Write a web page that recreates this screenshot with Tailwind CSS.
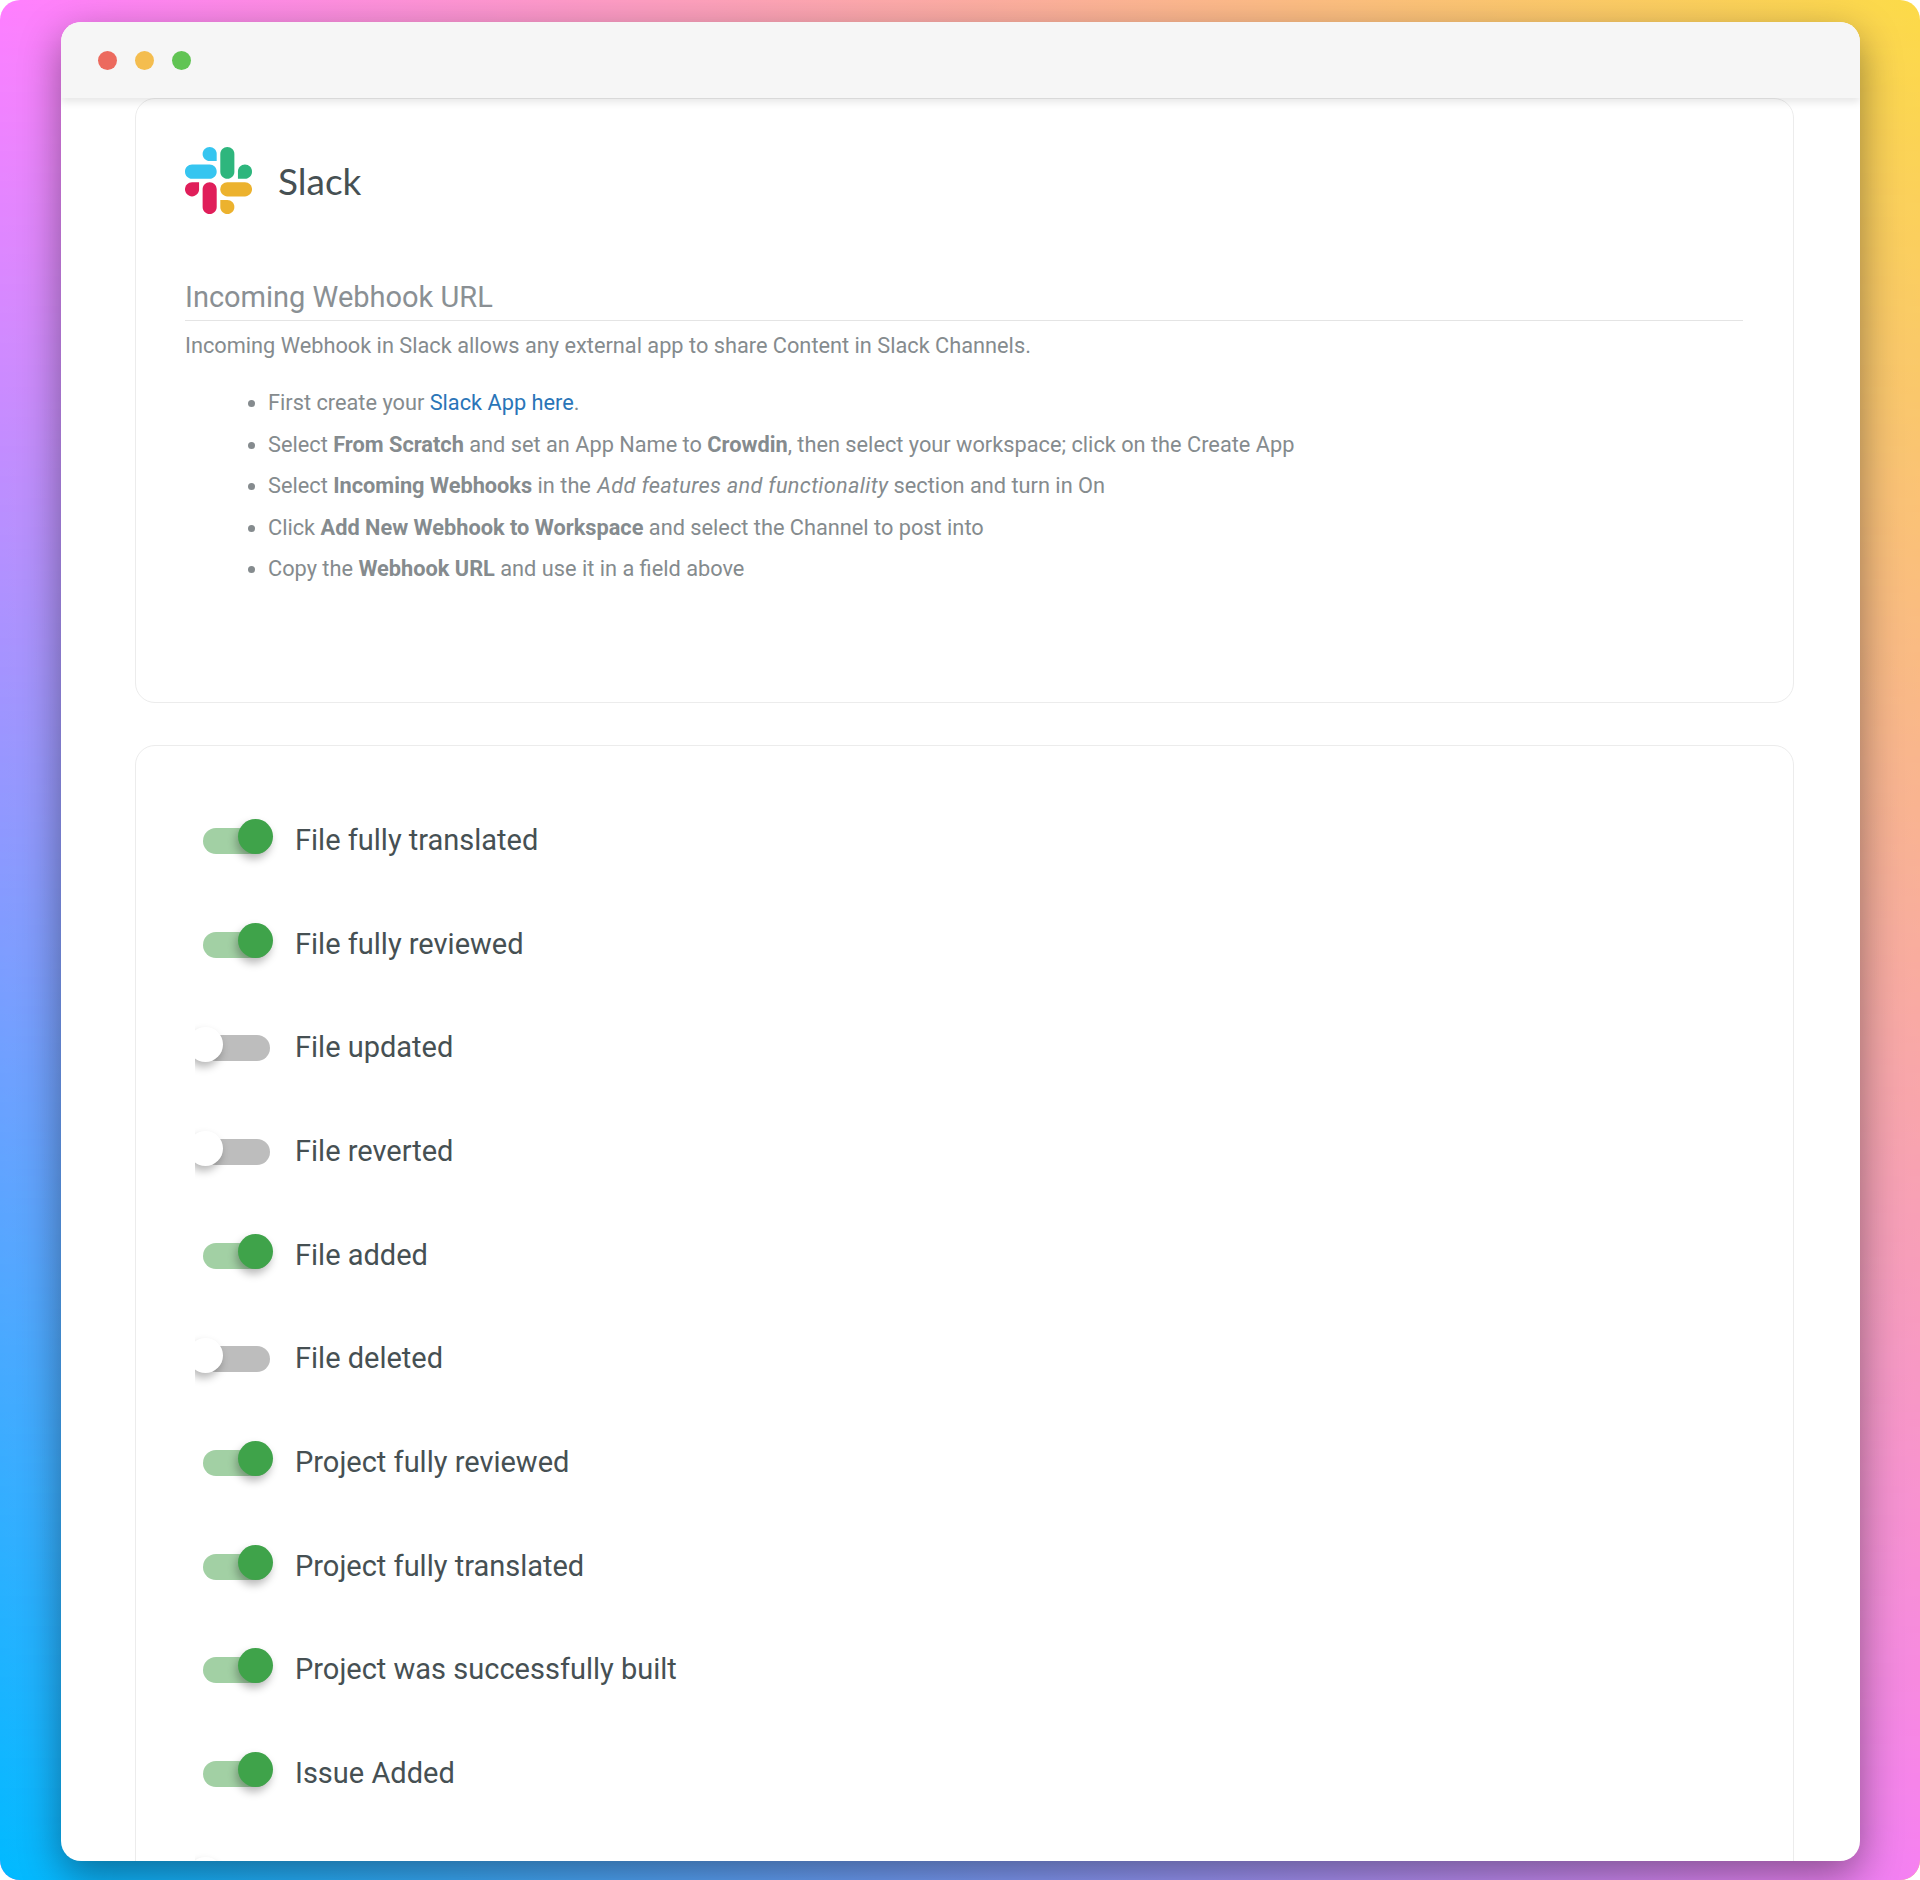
<!DOCTYPE html>
<html lang="en">
<head>
    <meta charset="UTF-8">
    <title>Crowdin Slack integration</title>
    <script src="https://cdn.jsdelivr.net/npm/@tailwindcss/browser@4"></script>
</head>
<body class="bg-white font-['Roboto',sans-serif]">

    <!-- Gradient backdrop -->
    <div class="relative h-[1880px] w-[1920px] overflow-hidden rounded-[20px] bg-[linear-gradient(to_right,#ff7fff,#fcdb48)] pt-[22px] pr-[60px] pb-[19px] pl-[61px]">
        <div class="absolute inset-0 bg-[linear-gradient(to_right,#00baff,#f67ff2)] [mask-image:linear-gradient(to_bottom,transparent,black)]"></div>

        <!-- Window -->
        <div class="relative flex h-full flex-col overflow-hidden rounded-[20px] bg-white shadow-[0_14px_40px_rgba(0,0,0,0.4)]">
            <div class="relative z-10 flex h-[76px] shrink-0 items-center gap-[18px] bg-[#f6f6f6] pl-[37px] shadow-[0_4px_8px_rgba(0,0,0,0.1)]">
                <span class="h-[19px] w-[19px] rounded-full bg-[#ec6a5e]"></span>
                <span class="h-[19px] w-[19px] rounded-full bg-[#f4bd4f]"></span>
                <span class="h-[19px] w-[19px] rounded-full bg-[#61c454]"></span>
            </div>

            <div class="flex flex-col gap-[42px] pr-[66px] pl-[74px]">
                <!-- Slack card -->
                <section class="h-[605px] shrink-0 rounded-[20px] border border-[#ececec] pt-[48px] pr-[50px] pl-[49px]">
                    <div class="flex items-center gap-[26px]">
                        <svg class="h-[67px] w-[67px]" viewBox="0 0 122.8 122.8">
                            <path d="M25.8 77.6c0 7.1-5.8 12.9-12.9 12.9S0 84.7 0 77.6s5.8-12.9 12.9-12.9h12.9v12.9z" fill="#E01E5A"/>
                            <path d="M32.3 77.6c0-7.1 5.8-12.9 12.9-12.9s12.9 5.8 12.9 12.9v32.3c0 7.1-5.8 12.9-12.9 12.9s-12.9-5.8-12.9-12.9V77.6z" fill="#E01E5A"/>
                            <path d="M45.2 25.8c-7.1 0-12.9-5.8-12.9-12.9S38.1 0 45.2 0s12.9 5.8 12.9 12.9v12.9H45.2z" fill="#36C5F0"/>
                            <path d="M45.2 32.3c7.1 0 12.9 5.8 12.9 12.9s-5.8 12.9-12.9 12.9H12.9C5.8 58.1 0 52.3 0 45.2s5.8-12.9 12.9-12.9h32.3z" fill="#36C5F0"/>
                            <path d="M97 45.2c0-7.1 5.8-12.9 12.9-12.9s12.9 5.8 12.9 12.9-5.8 12.9-12.9 12.9H97V45.2z" fill="#2EB67D"/>
                            <path d="M90.5 45.2c0 7.1-5.8 12.9-12.9 12.9s-12.9-5.8-12.9-12.9V12.9C64.7 5.8 70.5 0 77.6 0s12.9 5.8 12.9 12.9v32.3z" fill="#2EB67D"/>
                            <path d="M77.6 97c7.1 0 12.9 5.8 12.9 12.9s-5.8 12.9-12.9 12.9-12.9-5.8-12.9-12.9V97h12.9z" fill="#ECB22E"/>
                            <path d="M77.6 90.5c-7.1 0-12.9-5.8-12.9-12.9s5.8-12.9 12.9-12.9h32.3c7.1 0 12.9 5.8 12.9 12.9s-5.8 12.9-12.9 12.9H77.6z" fill="#ECB22E"/>
                        </svg>
                        <span class="font-['Lato',sans-serif] text-[37px] leading-none text-[#465053]">Slack</span>
                    </div>

                    <h2 class="mt-[65px] border-b border-[#e4e4e4] pb-[5px] text-[29px] leading-[36px] font-normal text-[#8a9094]">Incoming Webhook URL</h2>
                    <p class="mt-[10px] text-[21.75px] leading-[30px] text-[#858b8e]">Incoming Webhook in Slack allows any external app to share Content in Slack Channels.</p>

                    <ul class="mt-[27px] flex list-disc flex-col gap-[11.5px] pl-[83px] text-[21.75px] leading-[30px] text-[#858b8e]">
                        <li>First create your <a class="text-[#2a75b8]">Slack App here</a>.</li>
                        <li>Select <b class="font-bold">From Scratch</b> and set an App Name to <b class="font-bold">Crowdin</b>, then select your workspace; click on the Create App</li>
                        <li>Select <b class="font-bold">Incoming Webhooks</b> in the <i class="ml-[1px] tracking-[0.3px]">Add features and functionality</i> section and turn in On</li>
                        <li>Click <b class="font-bold">Add New Webhook to Workspace</b> and select the Channel to post into</li>
                        <li>Copy the <b class="font-bold">Webhook URL</b> and use it in a field above</li>
                    </ul>
                </section>

                <!-- Notification toggles -->
                <section id="events" class="h-[1200px] shrink-0 rounded-[20px] border border-[#ececec] pt-[43px] pl-[67px]"></section>
            </div>
        </div>
    </div>

    <script>
        const events = [
            { label: "File fully translated", on: true },
            { label: "File fully reviewed", on: true },
            { label: "File updated", on: false },
            { label: "File reverted", on: false },
            { label: "File added", on: true },
            { label: "File deleted", on: false },
            { label: "Project fully reviewed", on: true },
            { label: "Project fully translated", on: true },
            { label: "Project was successfully built", on: true },
            { label: "Issue Added", on: true },
            { label: "", on: false }
        ];

        const list = document.getElementById('events');

        events.forEach(ev => {
            const track = ev.on ? 'bg-[#a2d0a4]' : 'bg-[#bdbdbd]';
            // the off thumb's shadow is cut on its left side in the screenshot
            const thumb = ev.on
                ? 'left-[35px] -top-[9px] bg-[#3fa34a]'
                : '-left-[15px] -top-[8px] bg-white [clip-path:inset(-20px_-20px_-20px_7px)]';
            const row = document.createElement('div');
            row.className = 'flex h-[103.7px] items-center gap-[25px]';
            row.innerHTML = `
                <div class="relative h-[26px] w-[67px] rounded-full ${track}">
                    <span class="absolute h-[35px] w-[35px] rounded-full shadow-[-2px_5px_9px_rgba(0,0,0,0.28)] ${thumb}"></span>
                </div>
                <span class="-mt-[1px] text-[29px] leading-none text-[#465053]">${ev.label}</span>
            `;
            list.appendChild(row);
        });
    </script>
</body>
</html>
